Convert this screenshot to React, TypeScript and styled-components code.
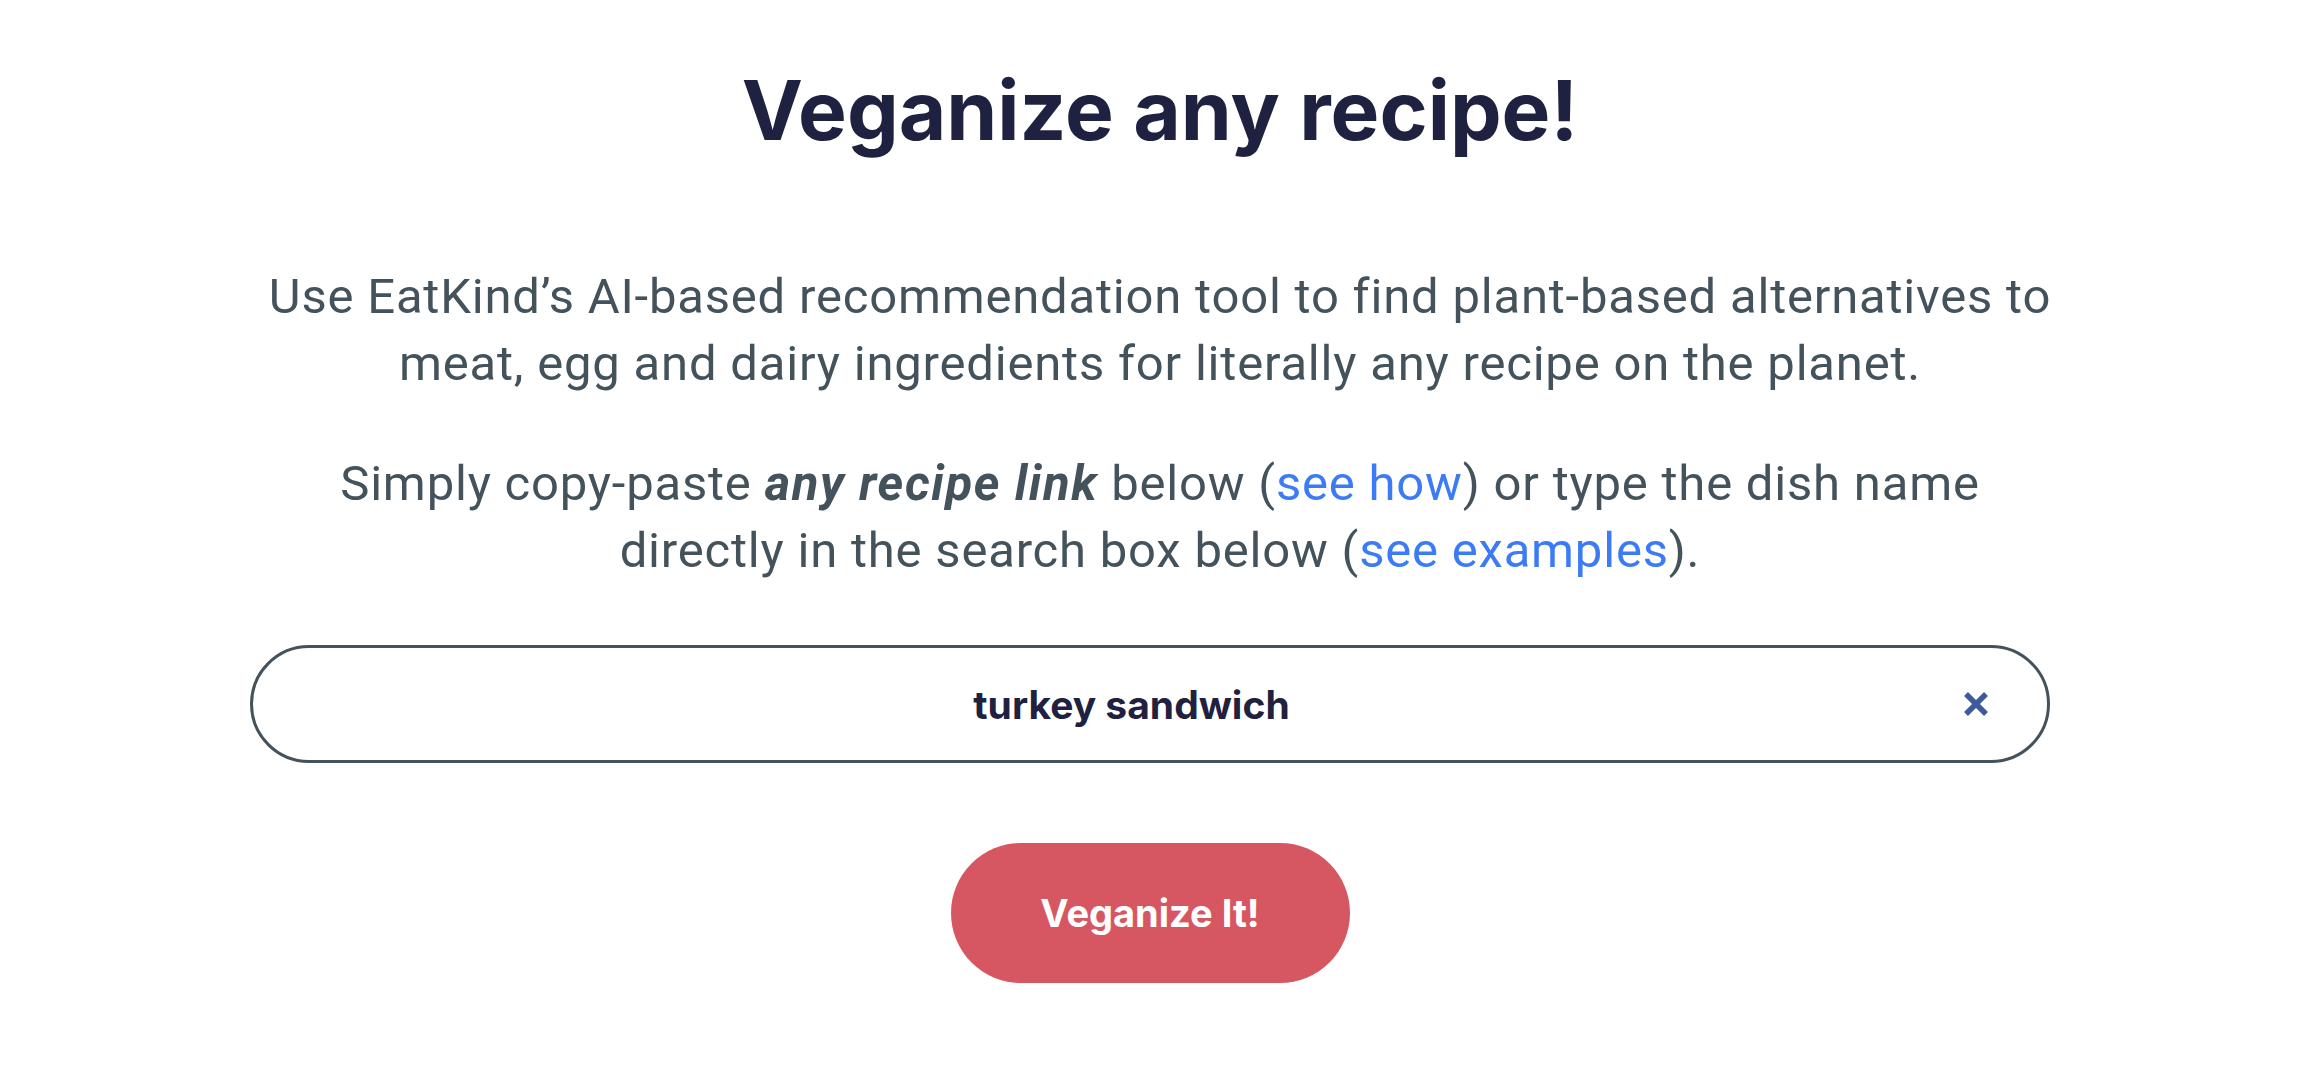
import { useEffect, useRef, useState } from 'react';
import styled, { createGlobalStyle } from 'styled-components';

const GlobalStyle = createGlobalStyle`
    * {
        box-sizing: border-box;
    }
    body {
        margin: 0;
        background: #fff;
        font-family: Inter, 'Noto Sans', sans-serif;
    }
`;

const App = () => {
    const [query, setQuery] = useState('turkey sandwich');
    const inputRef = useRef<HTMLInputElement>(null);

    useEffect(() => {
        const el = inputRef.current;
        if (!el) return;
        el.focus();
        el.setSelectionRange(el.value.length, el.value.length);
    }, []);

    return (
        <>
            <GlobalStyle />
            <Page>
                <Title>Veganize any recipe!</Title>
                <Intro>
                    Use EatKind’s AI-based recommendation tool to find plant-based alternatives to meat,
                    egg and dairy ingredients for literally any recipe on the planet.
                </Intro>
                <Intro>
                    Simply copy-paste <strong>any recipe link</strong> below (<a href="#how">see how</a>)
                    or type the dish name directly in the search box below (
                    <a href="#examples">see examples</a>).
                </Intro>
                <SearchForm onSubmit={(e) => e.preventDefault()}>
                    <SearchField>
                        <SearchInput
                            ref={inputRef}
                            autoFocus
                            value={query}
                            onChange={(e) => setQuery(e.target.value)}
                        />
                        <ClearButton type="button" aria-label="Clear" onClick={() => setQuery('')}>
                            <svg width="26" height="26" viewBox="0 0 26 26">
                                <path
                                    d="M3 3 L23 23 M23 3 L3 23"
                                    stroke="#3f5a9b"
                                    strokeWidth="5.5"
                                />
                            </svg>
                        </ClearButton>
                    </SearchField>
                    <SubmitButton type="submit">Veganize It!</SubmitButton>
                </SearchForm>
            </Page>
        </>
    );
};

export default App;

const Page = styled.main`
    display: flex;
    flex-direction: column;
    align-items: center;
    padding: 56px 4px 0 0;
`;

const Title = styled.h1`
    margin: 0 0 97px;
    font-size: 82px;
    line-height: 110px;
    font-weight: 700;
    color: #1f2140;
`;

const Intro = styled.p`
    max-width: 1796px;
    margin: 0 0 53px;
    font-family: Roboto, 'Noto Sans', sans-serif;
    font-size: 49px;
    line-height: 67px;
    font-weight: 400;
    letter-spacing: 0.8px;
    color: #44525c;
    text-align: center;
    strong {
        font-weight: 700;
        font-style: italic;
        letter-spacing: 1.6px;
    }
    a {
        color: #3b7bf5;
        text-decoration: none;
    }
`;

const SearchForm = styled.form`
    display: flex;
    flex-direction: column;
    align-items: center;
    margin: 8px 20px 0 0;
`;

const SearchField = styled.div`
    width: 1800px;
    height: 118px;
    display: flex;
    align-items: center;
    border: 3px solid #44525c;
    border-radius: 9999px;
    background: #fff;
`;

const SearchInput = styled.input`
    flex: 1;
    min-width: 0;
    height: 100%;
    padding: 0 0 0 60px;
    border: none;
    outline: none;
    background: transparent;
    font-family: Inter, 'Noto Sans', sans-serif;
    font-size: 39px;
    font-weight: 700;
    color: #1f2140;
    caret-color: #1f2140;
    text-align: center;
`;

const ClearButton = styled.button`
    width: 52px;
    height: 52px;
    margin-right: 45px;
    padding: 0;
    display: flex;
    align-items: center;
    justify-content: center;
    border: none;
    background: none;
    cursor: pointer;
`;

const SubmitButton = styled.button`
    width: 399px;
    height: 140px;
    margin-top: 80px;
    border: none;
    border-radius: 70px;
    background: #d65762;
    font-family: Inter, 'Noto Sans', sans-serif;
    font-size: 38px;
    font-weight: 700;
    color: #fff;
    cursor: pointer;
`;
